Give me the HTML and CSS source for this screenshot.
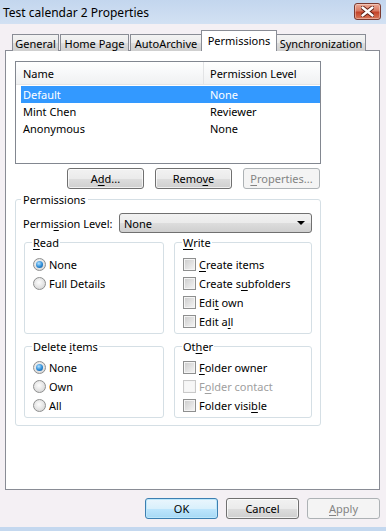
FILE: index.html
```html
<!DOCTYPE html>
<html lang="en">
<head>
    <meta charset="UTF-8">
    <title>Test calendar 2 Properties</title>
    <link rel="stylesheet" href="styles.css">
</head>
<body>
    <div class="titlebar">
        <span class="title">Test calendar 2 Properties</span>
        <div class="close">
            <svg width="13" height="11" viewBox="0 0 13 11">
                <path d="M1.5 1.5 L11.5 9.5 M11.5 1.5 L1.5 9.5" stroke="#5a1c12" stroke-width="4.2" stroke-linecap="round"/>
                <path d="M1.5 1.5 L11.5 9.5 M11.5 1.5 L1.5 9.5" stroke="#fff" stroke-width="2.4" stroke-linecap="round"/>
            </svg>
        </div>
    </div>

    <div class="client">
        <div class="tabs">
            <div class="tab t-general">General</div>
            <div class="tab t-home">Home Page</div>
            <div class="tab t-archive">AutoArchive</div>
            <div class="tab tab-active">Permissions</div>
            <div class="tab t-sync">Synchronization</div>
        </div>

        <div class="panel">
            <div class="listbox">
                <div class="list-head">
                    <div class="head-cell first">Name</div>
                    <div class="head-cell">Permission Level</div>
                </div>
                <div class="list-rows">
                    <div class="row selected"><span class="cell">Default</span><span>None</span></div>
                    <div class="row"><span class="cell">Mint Chen</span><span>Reviewer</span></div>
                    <div class="row"><span class="cell">Anonymous</span><span>None</span></div>
                </div>
            </div>

            <div class="list-buttons">
                <button class="btn">A<u>d</u>d...</button>
                <button class="btn">Remo<u>v</u>e</button>
                <button class="btn" disabled><u>P</u>roperties...</button>
            </div>

            <fieldset class="group perms">
                <legend>Permissions</legend>
                <div class="level-row">
                    <span class="level-label">Permi<u>s</u>sion Level:</span>
                    <div class="select">
                        <span>None</span>
                        <span class="arrow"></span>
                    </div>
                </div>

                <div class="pair">
                    <fieldset class="group sub">
                        <legend><u>R</u>ead</legend>
                        <div class="item"><span class="radio on"></span><span>None</span></div>
                        <div class="item"><span class="radio"></span><span>Full Details</span></div>
                    </fieldset>
                    <fieldset class="group sub">
                        <legend><u>W</u>rite</legend>
                        <div class="item"><span class="check"></span><span><u>C</u>reate items</span></div>
                        <div class="item"><span class="check"></span><span>Create s<u>u</u>bfolders</span></div>
                        <div class="item"><span class="check"></span><span>Edi<u>t</u> own</span></div>
                        <div class="item"><span class="check"></span><span>Edit a<u>l</u>l</span></div>
                    </fieldset>
                </div>

                <div class="pair second">
                    <fieldset class="group sub">
                        <legend>Delete <u>i</u>tems</legend>
                        <div class="item"><span class="radio on"></span><span>None</span></div>
                        <div class="item"><span class="radio"></span><span>Own</span></div>
                        <div class="item"><span class="radio"></span><span>All</span></div>
                    </fieldset>
                    <fieldset class="group sub">
                        <legend>Ot<u>h</u>er</legend>
                        <div class="item"><span class="check"></span><span><u>F</u>older owner</span></div>
                        <div class="item disabled"><span class="check"></span><span>F<u>o</u>lder contact</span></div>
                        <div class="item"><span class="check"></span><span>Folder visi<u>b</u>le</span></div>
                    </fieldset>
                </div>
            </fieldset>
        </div>

        <div class="footer">
            <button class="btn btn-wide btn-default">OK</button>
            <button class="btn btn-wide">Cancel</button>
            <button class="btn btn-wide" disabled><u>A</u>pply</button>
        </div>
    </div>

    <div class="frame-bottom"></div>
</body>
</html>
```

FILE: styles.css
```css
* {
    box-sizing: border-box;
}
body {
    margin: 0;
    width: 386px;
    height: 531px;
    overflow: hidden;
    display: flex;
    flex-direction: column;
    font-family: "Noto Sans", sans-serif;
    font-size: 11px;
    line-height: 15px;
    color: #000;
    background: #f4f0f4;
}
u {
    text-decoration-thickness: 1px;
    text-underline-offset: 2px;
}

/* title bar */
.titlebar {
    height: 24px;
    flex: none;
    display: flex;
    align-items: center;
    justify-content: space-between;
    padding: 0 5px 0 3px;
    background: linear-gradient(#c3d6ee, #d2e1f3);
    font-size: 12px;
}
.close {
    width: 27px;
    height: 17px;
    margin-top: -2px;
    display: flex;
    align-items: center;
    justify-content: center;
    border: 1px solid #7b3a30;
    border-radius: 3px;
    background: linear-gradient(#eba894, #d97a63 45%, #c4442a 55%, #d9785a);
    box-shadow: inset 0 0 0 1px rgba(255, 255, 255, 0.35);
}

.client {
    flex: 1;
    display: flex;
    flex-direction: column;
    padding: 7px 6px 0 5px;
}

/* tabs */
.tabs {
    height: 20px;
    display: flex;
    align-items: flex-end;
    padding-left: 7px;
    margin-bottom: -1px;
    position: relative;
    z-index: 1;
}
.tab {
    height: 17px;
    margin-right: 1px;
    padding-top: 1px;
    text-align: center;
    white-space: nowrap;
    border: 1px solid #898c95;
    border-bottom: none;
    background: linear-gradient(#f3f3f3, #ebebeb 50%, #dddddd 51%, #cfcfcf);
}
.t-general { width: 47px; }
.t-home { width: 69px; }
.t-archive { width: 72px; }
.t-sync { width: 90px; }
.tab-active {
    width: 76px;
    height: 21px;
    margin: 0 -1px 0 -2px;
    padding-top: 2px;
    background: #fff;
    position: relative;
}

/* main panel */
.panel {
    height: 440px;
    flex: none;
    padding: 10px 0 0 9px;
    background: #fff;
    border: 1px solid #898c95;
}

.listbox {
    width: 306px;
    height: 103px;
    border: 1px solid #828790;
    background: #fff;
}
.list-head {
    height: 23px;
    display: grid;
    grid-template-columns: 188px 1fr;
    border-bottom: 1px solid #e5e5e5;
    background: linear-gradient(#ffffff, #f7f8f9 50%, #f0f1f2);
}
.head-cell {
    padding: 4px 0 0 6px;
}
.head-cell.first {
    padding-left: 7px;
    border-right: 1px solid #e3e4e6;
}
.list-rows {
    padding: 1px 0 0 5px;
}
.row {
    height: 17px;
    display: grid;
    grid-template-columns: 189px 1fr;
    align-items: center;
}
.row .cell {
    padding-left: 2px;
}
.row.selected {
    background: #3399ff;
    color: #fff;
}

/* buttons */
.list-buttons {
    width: 306px;
    display: flex;
    justify-content: flex-end;
    gap: 11px;
    padding-right: 1px;
    margin-top: 4px;
}
.btn {
    width: 77px;
    height: 21px;
    padding: 0;
    font: inherit;
    color: #000;
    border: 1px solid #707070;
    border-radius: 3px;
    background: linear-gradient(#f2f2f2, #ebebeb 50%, #dddddd 51%, #cfcfcf);
    box-shadow: inset 0 0 0 1px rgba(255, 255, 255, 0.7);
}
.btn:disabled {
    color: #838383;
    border-color: #adb2b5;
    background: #f4f4f4;
    box-shadow: none;
}
.btn-wide {
    width: 73px;
}
.btn-default {
    border-color: #3c7fb1;
    background: linear-gradient(#eaf6fd, #d9f0fc 50%, #bee6fd 51%, #a7d9f5);
    box-shadow: inset 0 0 0 1px #bde7fb;
}

/* group boxes */
.group {
    margin: 0;
    min-width: 0;
    border: 1px solid #d5dfe5;
    border-radius: 3px;
}
.group legend {
    padding: 0 2px;
}
.perms {
    width: 306px;
    margin-top: 3px;
    padding: 0 8px 7px 8px;
}
.perms > legend {
    margin-left: -3px;
}
.level-row {
    display: flex;
    align-items: center;
    margin: 6px 0 0 -1px;
}
.level-label {
    width: 96px;
}
.select {
    width: 193px;
    height: 20px;
    display: flex;
    align-items: center;
    justify-content: space-between;
    padding: 0 6px 0 4px;
    border: 1px solid #707070;
    border-radius: 3px;
    background: linear-gradient(#f2f2f2, #ebebeb 50%, #dddddd 51%, #cfcfcf);
}
.arrow {
    width: 0;
    height: 0;
    border-left: 4px solid transparent;
    border-right: 4px solid transparent;
    border-top: 4px solid #000;
}

.pair {
    display: grid;
    grid-template-columns: 140px 1fr;
    gap: 10px;
    margin-top: 2px;
}
.pair.second {
    margin-top: 5px;
}
.sub {
    padding: 5px 4px 2px 8px;
}
.sub legend {
    margin-left: -1px;
    padding: 0 1px;
}
.pair.second .sub {
    padding-top: 4px;
}

.item {
    height: 19px;
    display: flex;
    align-items: center;
    gap: 3px;
    white-space: nowrap;
}
.item.disabled {
    color: #a0a0a0;
}
.radio {
    width: 13px;
    height: 13px;
    flex: none;
    border-radius: 50%;
    border: 1px solid #8e8f8f;
    background: radial-gradient(circle at 45% 40%, #fdfdfd, #dcdcdc 70%, #cbcbcb);
    position: relative;
}
.radio.on::after {
    content: "";
    position: absolute;
    left: 2px;
    top: 2px;
    width: 7px;
    height: 7px;
    border-radius: 50%;
    background: radial-gradient(circle at 40% 35%, #b4e2ff, #2a8ad6 55%, #0b4b8c);
}
.check {
    width: 13px;
    height: 13px;
    flex: none;
    border: 1px solid #8e8f8f;
    background: linear-gradient(135deg, #cbcbcb, #f6f6f6);
    box-shadow: inset 0 0 0 1px #f4f4f4;
}
.item.disabled .check {
    border-color: #c9c9c9;
    background: #f7f7f7;
}

/* dialog buttons */
.footer {
    display: flex;
    justify-content: flex-end;
    gap: 8px;
    margin-top: 8px;
}

.frame-bottom {
    height: 4px;
    flex: none;
    margin-top: auto;
    background: #c4d8ef;
}
```
